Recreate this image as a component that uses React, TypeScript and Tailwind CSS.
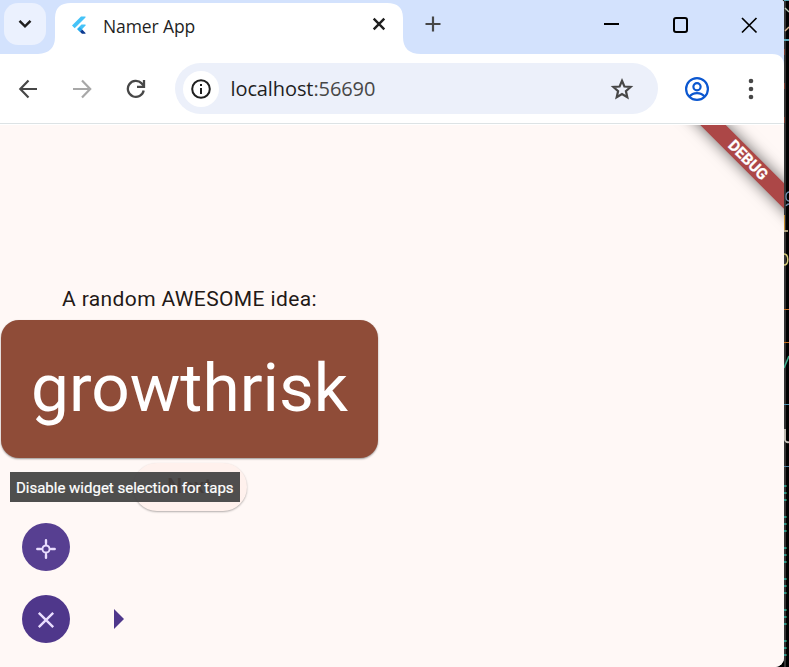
import React from 'react';

type Mark = { top: number; height: number; left: number; width: number; color: string };

const marks: Mark[] = [
  { top: 0, height: 1, left: 0, width: 5, color: '#5aa7b8' },
  { top: 39, height: 2, left: 0, width: 5, color: '#5aa7b8' },
  { top: 49, height: 6, left: 0, width: 1, color: '#7d3a2c' },
  { top: 83, height: 6, left: 0, width: 1, color: '#7d3a2c' },
  { top: 117, height: 6, left: 0, width: 1, color: '#7d3a2c' },
  { top: 309, height: 1, left: 0, width: 5, color: '#c26a1c' },
  { top: 342, height: 1, left: 0, width: 5, color: '#c26a1c' },
  { top: 404, height: 1, left: 0, width: 5, color: '#4f93b0' },
  { top: 466, height: 1, left: 0, width: 5, color: '#4f7f9c' },
];

const dashRows = [485, 516, 547, 578, 609, 640];

function EditorSliver() {
  return (
    <div className="h-full w-[5px] shrink-0 overflow-hidden bg-black">
      <svg width="5" height="667" fill="none">
        <rect width="2" height="667" fill="#333" />
        <path d="M1 8l4 4" stroke="#b9c9b5" strokeWidth="1.5" />
        <path d="M1 31l4-4" stroke="#d6b28c" strokeWidth="1.5" />
        <path d="M5 192c-4 0-4 9 0 9M2 206c1-2 3-2 3-2" stroke="#6f8fb0" strokeWidth="1.3" />
        <path d="M.5 215v15" stroke="#c58b2c" />
        <path d="M0 231h4" stroke="#e0cfa0" strokeWidth="1.5" />
        <path d="M0 254c5 0 5 11 0 11" stroke="#d2c87a" strokeWidth="1.6" />
        <path d="M5 356L0 368" stroke="#3fae8e" strokeWidth="1.5" />
        <path d="M1 429v11q1 3 4 2" stroke="#c9c4bb" strokeWidth="1.8" />
        {marks.map((m) => (
          <rect key={m.top} x={m.left} y={m.top} width={m.width} height={m.height} fill={m.color} />
        ))}
        {dashRows.flatMap((y) =>
          [0, 7, 14].map((d) => (
            <g key={y + d}>
              <rect x="0" y={y + d} width="2" height="2" fill="#2f918c" />
              <rect x="2" y={y + d} width="1" height="2" fill="#1d5c33" />
            </g>
          )),
        )}
      </svg>
    </div>
  );
}

function TabStrip() {
  return (
    <header className="relative flex h-[54px] shrink-0 bg-[#d3e2fd]">
      <svg className="absolute left-0 top-0" width="784" height="67" fill="#fff">
        <path d="M0 56Q2 54 6 54H38Q55 53 55 37V18Q55 3 71 3H387Q403 3 403 18V37Q403 54 421 54V56Z" />
        <path d="M0 54H784V67H0Z" />
        <path d="M772 54Q784 54 784 66V54Z" fill="#d3e2fd" />
      </svg>
      <button className="relative ml-1 mt-[3px] flex h-[42px] w-[42px] items-center justify-center rounded-[14px] bg-[#ebf1fe]">
        <svg width="14" height="10" fill="none" stroke="#1f1f1f" strokeWidth="2.5">
          <path d="M1.500 1.800L7 7.300l5.500-5.500" />
        </svg>
      </button>
      <div className="relative ml-[9px] mt-[3px] flex h-[46px] w-[348px] items-center">
        <svg className="-mt-[3px] ml-[16px]" width="18" height="20" viewBox="0 0 18 20">
          <path d="M14.500 1.500H10L1 10.500L3.700 13.200L14.500 2.500Z" fill="#45c3f8" />
          <path d="M14.500 9.500H10.500L6 14L8.700 16.700L14.500 10.500Z" fill="#45c3f8" />
          <path d="M6.500 14.300L8.700 12.100L11.200 14.500L8.900 16.800Z" fill="#29a9ee" />
          <path d="M8.900 16.700L11.200 14.500L14.500 18V18.800H11Z" fill="#0b3a91" />
        </svg>
        <span className="ml-[14px] whitespace-nowrap font-['Open_Sans',sans-serif] text-[17.500px] tracking-[-0.1px] text-[#1f1f1f]">Namer App</span>
        <svg className="mb-[4px] ml-auto mr-[17px]" width="14" height="14" fill="none" stroke="#1f1f1f" strokeWidth="2.400">
          <path d="M1.700 1.700l10.600 10.600M12.300 1.700L1.700 12.300" />
        </svg>
      </div>
      <svg className="relative ml-[22px] mt-4" width="16" height="16" fill="none" stroke="#474747" strokeWidth="2.200">
        <path d="M8 0.500v15M.5 8h15" />
      </svg>
      <div className="relative ml-auto flex items-start pr-[26px] pt-[17px]">
        <svg width="154" height="17" fill="none" stroke="#000" strokeWidth="1.700">
          <path d="M0 7h15" strokeWidth="2" />
          <rect x="70" y="1" width="13" height="14" rx="2" strokeWidth="2" />
          <path d="M138 1l14.500 14.500M152.500 1l-14.500 14.500" />
        </svg>
      </div>
    </header>
  );
}

function Toolbar() {
  return (
    <nav className="relative flex h-[70px] shrink-0 items-center border-b border-[#dde3e5]">
      <svg className="ml-[18px]" width="20" height="20" fill="none" stroke="#474747" strokeWidth="2.200">
        <path d="M19 10H2.500M10.500 1.500L2.300 10l8.200 8.500" />
      </svg>
      <svg className="ml-[34px]" width="20" height="20" fill="none" stroke="#a8a8a8" strokeWidth="2.200">
        <path d="M1 10h16.500M10 1.500l8.200 8.500-8.200 8.500" />
      </svg>
      <svg className="ml-[34px]" width="20" height="20" fill="none" stroke="#474747" strokeWidth="2.300">
        <path d="M17.700 11.500A8 8 0 1 1 15.700 4.400L18 7" />
        <path d="M18 1v6.800h-7" />
      </svg>
      <div className="ml-[29px] flex h-[51px] w-[483px] items-center rounded-full bg-[#ecf0fa] pl-2">
        <div className="flex h-9 w-9 items-center justify-center rounded-full bg-white">
          <svg width="20" height="20" fill="none" stroke="#1f1f1f" strokeWidth="2">
            <circle cx="10" cy="10" r="8.800" />
            <path d="M10 9v6M10 5v2" />
          </svg>
        </div>
        <span className="ml-[11.500px] whitespace-nowrap font-['Open_Sans',sans-serif] text-[20px] tracking-[-0.1px] text-[#1f1f1f]">
          localhost<span className="text-[#474747]">:56690</span>
        </span>
        <svg className="ml-auto mr-[24px]" width="24" height="24" fill="none" stroke="#474747" strokeWidth="2.200">
          <path d="M12 3.800l2.400 5.700 6.200.5-4.700 4.100 1.400 6.100L12 17l-5.300 3.200 1.400-6.100L3.400 10l6.200-.5z" />
        </svg>
      </div>
      <svg className="ml-[27px]" width="24" height="24" fill="none" stroke="#0b57d0" strokeWidth="2.200">
        <circle cx="12" cy="12" r="10.900" />
        <circle cx="12" cy="9.800" r="3.600" />
        <path d="M4.500 19.500C8 15 16 15 19.500 19.500" />
      </svg>
      <svg className="ml-[39px]" width="6" height="22" fill="#474747">
        <circle cx="3" cy="3" r="2.300" />
        <circle cx="3" cy="11" r="2.300" />
        <circle cx="3" cy="19" r="2.300" />
      </svg>
    </nav>
  );
}

function NamerPage() {
  return (
    <main className="relative mt-px flex-1 overflow-hidden bg-[#fff8f6] font-[Roboto,sans-serif]">
      <div className="flex w-[379px] flex-col items-center pt-[159px]">
        <p className="text-[21px] leading-[30px] tracking-[0.375px] text-[#231917]">A random AWESOME idea:</p>
        <div className="mt-[5.500px] flex h-[138px] w-[377px] items-center justify-center rounded-[18px] bg-[#8f4c38] shadow-[0_1px_2px_rgba(0,0,0,0.4)]">
          <span className="-mt-[2px] text-[67.5px] leading-[78px] text-white">growthrisk</span>
        </div>
        <button className="mt-[5.500px] h-[48px] w-[114px] rounded-full bg-[#fff1ed] text-[21px] font-medium tracking-[0.150px] text-[#8f4c38] shadow-[0_1px_2px_rgba(0,0,0,0.3)]">Next</button>
      </div>
      <div className="flex w-[124px] flex-col gap-6 pl-[22px] pt-[12px]">
        <div className="flex h-12 w-12 items-center justify-center rounded-full bg-[#573f91]">
          <svg className="mt-1" width="20" height="20" fill="none" stroke="#eaddff" strokeWidth="2.400">
            <circle cx="10" cy="10" r="3.600" strokeWidth="2" />
            <path d="M10 1.300v3M10 15.700v3M1.300 10h3M15.700 10h3" strokeLinecap="round" />
            <path d="M10 4v2.500M10 13.500V16M4 10h2.500M13.500 10H16" strokeWidth="1.800" />
          </svg>
        </div>
        <div className="flex items-center justify-between">
          <div className="flex h-12 w-12 items-center justify-center rounded-full bg-[#4f378b]">
            <svg className="mt-px" width="18" height="18" fill="none" stroke="#eaddff" strokeWidth="2.400">
              <path d="M1.800 1.800l14.400 14.400M16.200 1.800L1.800 16.200" />
            </svg>
          </div>
          <svg width="10" height="20" fill="#4f378b">
            <path d="M0 0l10 10L0 20z" />
          </svg>
        </div>
      </div>
      <div className="absolute left-[10px] top-[347px] flex h-[30px] w-[229.500px] items-center justify-center whitespace-nowrap bg-[#3c3c3c]/90 text-[15px] text-white">
        <span className="mt-[2px] [-webkit-text-stroke:0.2px_white]">Disable widget selection for taps</span>
      </div>
      <div className="absolute left-[658px] top-[26px] flex h-[18px] w-[180px] rotate-45 items-center justify-center bg-[#ac4747] text-[15.300px] font-bold text-white shadow-[0_0_15px_rgba(0,0,0,0.6)]">
        <span className="[-webkit-text-stroke:0.3px_white]">DEBUG</span>
      </div>
    </main>
  );
}

export default function App() {
  return (
    <div className="flex h-[667px] w-[789px] overflow-hidden bg-black">
      <div className="flex h-full w-[784px] shrink-0 flex-col overflow-hidden rounded-br-[9px] rounded-tr-[3px] bg-white">
        <TabStrip />
        <Toolbar />
        <NamerPage />
      </div>
      <EditorSliver />
    </div>
  );
}
